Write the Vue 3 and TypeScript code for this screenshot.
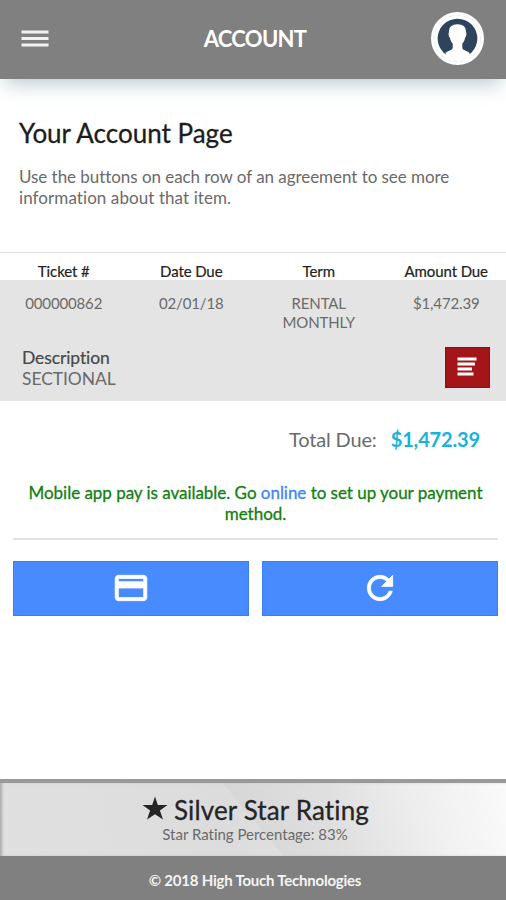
<script setup lang="ts">
interface Agreement {
  ticket: string
  dateDue: string
  term: string
  amount: string
  description: string
}

const columns: string[] = ['Ticket #', 'Date Due', 'Term', 'Amount Due']
const agreements: Agreement[] = [
  { ticket: '000000862', dateDue: '02/01/18', term: 'RENTAL MONTHLY', amount: '$1,472.39', description: 'SECTIONAL' },
]
const totalDue = '$1,472.39'
const ratingPercent = 83
</script>

<template>
  <div class="screen">
    <header class="topbar">
      <button class="icon-button menu" aria-label="Menu">
        <svg width="28" height="18" viewBox="0 0 28 18">
          <path d="M0.5 0.5h27v3h-27zM0.5 7h27v3h-27zM0.5 13.5h27v3h-27z" fill="#f2f2f2" />
        </svg>
      </button>
      <h1 class="title"><span>ACCOUNT</span></h1>
      <button class="icon-button avatar" aria-label="Profile">
        <svg width="53" height="53" viewBox="0 0 52 52">
          <circle cx="26" cy="26" r="26" fill="#fff" />
          <circle cx="26" cy="26" r="22.8" fill="none" stroke="#e3e5e7" stroke-width="0.7" stroke-dasharray="5 2" />
          <circle cx="26" cy="26" r="19.5" fill="#2e445d" />
          <path d="M26 12c-5.500 0-8.500 2.800-8.300 7.500-.8.800-.5 4.500.9 5.700.4 2.800 1.400 4.600 2.700 5.800v4c0 2.200-3.800 2.500-7 5v7h23.400v-7c-3.200-2.500-7-2.800-7-5v-4c1.300-1.200 2.300-3 2.700-5.800 1.400-1.200 1.700-4.900.9-5.700.2-4.700-2.800-7.500-8.300-7.500z" fill="#fff" />
        </svg>
      </button>
    </header>

    <main class="content">
      <section class="intro">
        <h2 class="heading"><span>Your Account Page</span></h2>
        <p class="lead">Use the buttons on each row of an agreement to see more<br /><span class="lead-end">information about that item.</span></p>
      </section>

      <section class="table">
        <div class="row head">
          <span v-for="column in columns" :key="column" class="cell"><span>{{ column }}</span></span>
        </div>
        <article v-for="item in agreements" :key="item.ticket" class="agreement">
          <div class="row values">
            <span class="cell"><span>{{ item.ticket }}</span></span>
            <span class="cell"><span>{{ item.dateDue }}</span></span>
            <span class="cell term"><span>{{ item.term }}</span></span>
            <span class="cell"><span>{{ item.amount }}</span></span>
          </div>
          <div class="details">
            <div class="description">
              <div><span class="label">Description</span></div>
              <div><span class="value">{{ item.description }}</span></div>
            </div>
            <button class="icon-button detail" aria-label="Details">
              <svg width="20" height="20" viewBox="0 0 20 20">
                <path d="M0.500 0.500h19v3h-19zM0.500 5.500h17.500v3h-17.500zM0.500 10.500h14.500v3h-14.500zM0.500 15.500h16v3h-16z" fill="#fff" />
              </svg>
            </button>
          </div>
        </article>
      </section>

      <div class="total"><span class="total-label">Total Due:</span><strong class="total-value">{{ totalDue }}</strong></div>

      <p class="notice"><span>Mobile app pay is available. Go <a class="link">online</a> to set up your payment</span><br /><span>method.</span></p>

      <div class="actions">
        <button class="icon-button action" aria-label="Pay">
          <svg width="38" height="38" viewBox="0 0 24 24">
            <path d="M20 4H4c-1.110 0-1.990.89-1.990 2L2 18c0 1.110.89 2 2 2h16c1.110 0 2-.89 2-2V6c0-1.110-.89-2-2-2zm0 14H4v-6h16v6zm0-10H4V6h16v2z" fill="#fff" stroke="#fff" stroke-width="0.500" />
          </svg>
        </button>
        <button class="icon-button action" aria-label="Refresh">
          <svg width="38" height="38" viewBox="0 0 24 24">
            <path d="M17.650 6.350C16.200 4.900 14.210 4 12 4c-4.420 0-7.990 3.580-7.990 8s3.570 8 7.990 8c3.730 0 6.840-2.550 7.730-6h-2.080c-.82 2.330-3.040 4-5.650 4-3.310 0-6-2.690-6-6s2.690-6 6-6c1.660 0 3.140.69 4.220 1.780L13 11h7V4l-2.350 2.350z" fill="#fff" stroke="#fff" stroke-width="0.500" />
          </svg>
        </button>
      </div>
    </main>

    <section class="rating">
      <div class="rating-title">
        <svg class="star" width="26" height="25" viewBox="0 0 26 25">
          <path d="M13 0.500l2.800 8.500 9.700.1-7.600 5.400 3.100 9.100L13 18.200l-8 5.400 3.100-9.100L.500 9.100l9.700-.1z" fill="#252525" />
        </svg>
        <span class="rating-name">Silver Star Rating</span>
      </div>
      <div class="rating-note"><span>Star Rating Percentage: {{ ratingPercent }}%</span></div>
    </section>

    <footer class="footer"><span>© 2018 High Touch Technologies</span></footer>
  </div>
</template>

<style>
body {
  margin: 0;
  background: #fff;
}
</style>

<style scoped>
.screen {
  display: flex;
  flex-direction: column;
  height: 900px;
  overflow: hidden;
  background: #fff;
  color: #6a6a6a;
  font-family: Lato, "Liberation Sans", sans-serif;
  font-variant-ligatures: none;
}

h1, h2, p {
  margin: 0;
}

.icon-button {
  display: flex;
  align-items: center;
  justify-content: center;
  padding: 0;
  border: 0;
  background: none;
}

svg {
  display: block;
}

.topbar {
  display: grid;
  grid-template-columns: 70px 1fr 75px;
  align-items: center;
  flex: none;
  box-sizing: border-box;
  height: 79px;
  padding-bottom: 2px;
  background: #808080;
  box-shadow: 0 10px 18px -5px rgba(95, 130, 140, 0.42);
}

.menu {
  justify-content: flex-start;
  padding-left: 21px;
}

.title {
  padding-left: 9px;
  color: #fff;
  font-size: 22px;
  font-weight: 700;
  letter-spacing: -0.7px;
  line-height: 26px;
  text-align: center;
}

.avatar {
  justify-content: flex-start;
}

.content {
  flex: 1;
}

.intro {
  height: 173px;
  box-sizing: border-box;
  padding: 38px 19px 0;
}

.heading {
  color: #1c1c1c;
  font-size: 26px;
  font-weight: 400;
  line-height: 32px;
  -webkit-text-stroke: 0.3px currentColor;
}

.lead {
  margin-top: 17px;
  font-size: 17px;
  letter-spacing: -0.05px;
  line-height: 21px;
  white-space: nowrap;
}

.lead-end {
  letter-spacing: 0.08px;
}

.table {
  border-top: 1px solid #ddd;
}

.row {
  display: grid;
  grid-template-columns: repeat(4, 127.500px);
  text-align: center;
}

.head {
  height: 27px;
  color: #222;
  font-size: 15px;
  letter-spacing: -0.1px;
  line-height: 36px;
  -webkit-text-stroke: 0.2px currentColor;
}

.agreement {
  box-sizing: border-box;
  height: 121px;
  padding-top: 14px;
  background: #e4e4e4;
}

.values {
  height: 52px;
  font-size: 15px;
  letter-spacing: -0.15px;
  line-height: 19px;
}

.term {
  padding: 0 25px;
}

.details {
  display: flex;
  justify-content: space-between;
  padding: 0 16px 0 22px;
}

.description {
  padding-top: 1px;
  font-size: 17.500px;
  letter-spacing: -0.1px;
  line-height: 21px;
}

.label {
  color: #484848;
  -webkit-text-stroke: 0.2px currentColor;
}

.detail {
  width: 45px;
  height: 41px;
  margin-top: 1px;
  padding-right: 2px;
  padding-bottom: 1px;
  background: #a4151a;
  box-shadow: inset 0 0 0 1px #920d12;
}

.total {
  display: flex;
  justify-content: flex-end;
  gap: 14px;
  height: 81px;
  box-sizing: border-box;
  padding: 26px 26px 0 0;
  font-size: 20px;
  letter-spacing: -0.15px;
  line-height: 24px;
}

.total-value {
  color: #17b3d9;
}

.notice {
  height: 56px;
  margin: 0 8px 0 13px;
  border-bottom: 2px solid #e3e3e3;
  color: #138013;
  font-size: 17px;
  letter-spacing: -0.03px;
  line-height: 21px;
  text-align: center;
  white-space: nowrap;
  -webkit-text-stroke: 0.3px currentColor;
}

.link {
  color: #4285f4;
}

.actions {
  display: grid;
  grid-template-columns: 1fr 1fr;
  gap: 13px;
  padding: 21px 8px 0 13px;
}

.action {
  height: 55px;
  padding-bottom: 2px;
  background: #488aff;
  box-shadow: inset 0 0 0 1px #3880ef;
}

.rating {
  display: flex;
  flex-direction: column;
  align-items: center;
  box-sizing: border-box;
  height: 77px;
  padding-top: 13px;
  border-top: 4px solid #999;
  background: linear-gradient(50deg, transparent 50%, rgba(130, 130, 130, 0.06) 50%, transparent 80%), linear-gradient(80deg, #e0e0e0 0%, #dcdcdc 45%, #e2e2e2 65%, #fafafa 100%);
  box-shadow: inset 3px 0 3px -1px #aaa;
}

.rating-title {
  display: flex;
  align-items: center;
  gap: 6px;
  height: 28px;
  padding-left: 5px;
}

.star {
  margin-top: -3px;
}

.rating-name {
  color: #252525;
  font-size: 26px;
  letter-spacing: 0.14px;
  line-height: 28px;
  -webkit-text-stroke: 0.3px currentColor;
}

.rating-note {
  padding-left: 4px;
  font-size: 15px;
  letter-spacing: -0.01px;
  line-height: 20px;
}

.footer {
  flex: none;
  height: 44px;
  padding-left: 4px;
  background: #808080;
  color: #f4f4f4;
  font-size: 15px;
  font-weight: 700;
  letter-spacing: -0.22px;
  line-height: 48px;
  text-align: center;
}
</style>
